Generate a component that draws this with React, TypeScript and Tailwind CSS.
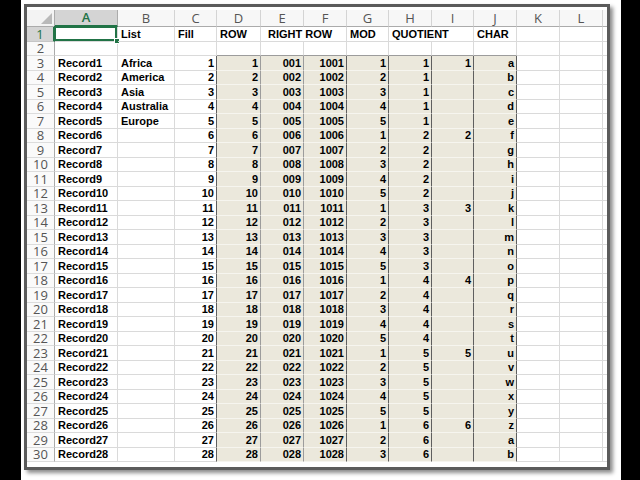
import React from "react";

const LETTERS = ["A", "B", "C", "D", "E", "F", "G", "H", "I", "J", "K", "L", "M"];
const LIST = ["Africa", "America", "Asia", "Australia", "Europe"];
const ALPHA = "abcdefghijklmnopqrstuvwxyz";

// column D..J get the beige fill for the data rows
const beigeBorder: Record<string, string> = {
  D: "border-r-[#9c9c9c]",
  E: "border-r-[#9c9c9c]",
  F: "border-r-[#5f5f5f]",
  G: "border-r-[#5f5f5f]",
  H: "border-r-[#5f5f5f]",
  I: "border-r-[#5f5f5f]",
  J: "border-r-[#5f5f5f]",
};

function rowValues(r: number): Record<string, string> {
  if (r === 1) {
    return { B: "List", C: "Fill", D: "ROW", E: "RIGHT ROW", G: "MOD", H: "QUOTIENT", J: "CHAR" };
  }
  if (r < 3) return {};
  const k = r - 2;
  const v: Record<string, string> = {
    A: `Record${k}`,
    C: String(k),
    D: String(k),
    E: String(k).padStart(3, "0"),
    F: String(1000 + k),
    G: String(((k - 1) % 5) + 1),
    H: String(Math.ceil(k / 5)),
    J: ALPHA[(k - 1) % 26],
  };
  if (k <= 5) v.B = LIST[k - 1];
  if ((k - 1) % 5 === 0) v.I = String((k - 1) / 5 + 1);
  return v;
}

function Cell({ r, col }: { r: number; col: string }) {
  const val = rowValues(r)[col] ?? "";
  const beige = r >= 3 && beigeBorder[col];
  const left = col === "A" || col === "B";
  const isNum = r >= 3 && !left;

  if (r === 1) {
    const overflow = col === "E" || col === "H";
    return (
      <div
        className={`relative flex items-center whitespace-nowrap border-b border-[#dadada] text-[11px] font-bold leading-none text-black ${
          overflow ? "" : "border-r"
        } ${col === "E" ? "pl-[7px]" : "pl-[3px]"}`}
      >
        <span className="relative z-10 pt-[1px]">{val}</span>
        {col === "A" && (
          <>
            <div className="absolute -left-[1px] -top-[1px] right-0 bottom-0 border-2 border-[#217346]" />
            <div className="absolute -bottom-[3px] -right-[3px] h-[6px] w-[6px] border border-white bg-[#217346]" />
          </>
        )}
      </div>
    );
  }

  let border = "border-r border-b border-[#dadada]";
  if (beige) border = `border-r border-b border-b-[#f6f5ef] ${beigeBorder[col]}`;
  else if (r >= 3 && col === "C") border = "border-r border-b border-b-[#dadada] border-r-[#5f5f5f]";
  else if (r === 2 && beigeBorder[col]) border = "border-r border-b border-r-[#dadada] border-b-[#9c9c9c]";

  return (
    <div
      className={`flex items-center overflow-hidden whitespace-nowrap text-[11px] font-bold leading-none text-black ${border} ${
        beige ? "bg-[#ebe8dc]" : ""
      } ${isNum ? "justify-end pr-[2px]" : "pl-[3px]"}`}
    >
      <span className="pt-[1px]">{val}</span>
    </div>
  );
}

export default function App() {
  const rows = Array.from({ length: 30 }, (_, i) => i + 1);

  return (
    <div className="flex h-[480px] w-[640px] overflow-hidden bg-black">
      <div className="ml-[21px] h-full w-[600px] bg-white pl-[3px] pt-[4px]">
        <div className="h-[466px] w-[586px] overflow-hidden border-[3px] border-[#5b5b5b] bg-white shadow-[3px_3px_4px_rgba(0,0,0,0.45)]">
          <div className="h-[3px] bg-white" />
          <div className="grid grid-cols-[28px_63px_57px_42px_44px_43px_43px_42px_43px_42px_43px_43px_43px_60px] grid-rows-[17px_repeat(30,14.5px)] font-['Liberation_Sans',Arial,sans-serif]">
            {/* corner */}
            <div className="relative border-b border-r border-[#ababab] bg-[#f3f3f3]">
              <svg className="absolute bottom-[2px] right-[2px]" width="11" height="11" viewBox="0 0 11 11">
                <polygon points="11,0 11,11 0,11" fill="#b9b9b9" />
              </svg>
            </div>
            {LETTERS.map((l) => (
              <div
                key={l}
                className={`flex items-center justify-center border-r font-['Open_Sans',sans-serif] text-[13px] leading-none ${
                  l === "A"
                    ? "border-b-2 border-r-[#ababab] border-b-[#217346] bg-[#d4d4d4] font-semibold text-[#217346]"
                    : "border-b border-[#d4d4d4] border-b-[#ababab] bg-[#f7f7f7] text-[#555]"
                }`}
              >
                {l === "M" ? "" : l}
              </div>
            ))}

            {rows.map((r) => (
              <React.Fragment key={r}>
                <div
                  className={`flex items-center justify-center border-b font-['Open_Sans',sans-serif] text-[13px] leading-[12px] ${
                    r === 1
                      ? "border-r-2 border-[#c6c6c6] border-r-[#217346] bg-[#d4d4d4] text-[#217346]"
                      : "border-r border-[#dcdcdc] border-r-[#ababab] bg-[#fafafa] text-[#555]"
                  }`}
                >
                  {r}
                </div>
                {LETTERS.map((col) => (
                  <Cell key={col} r={r} col={col} />
                ))}
              </React.Fragment>
            ))}
          </div>
        </div>
      </div>
    </div>
  );
}
